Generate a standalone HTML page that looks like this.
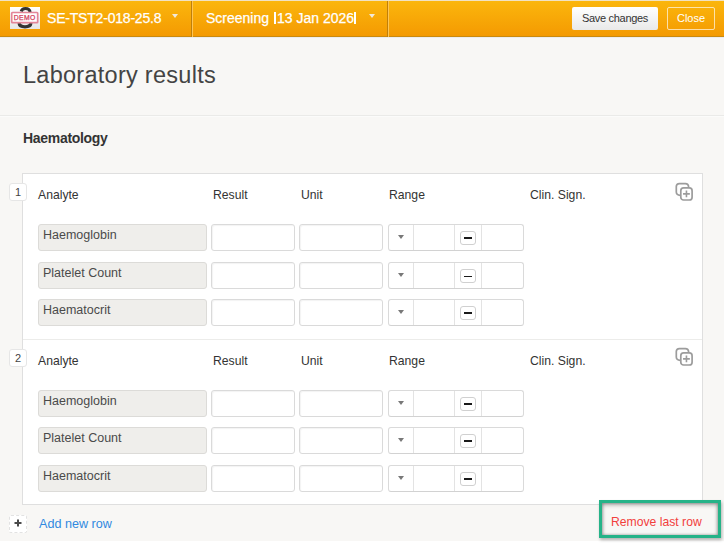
<!DOCTYPE html>
<html><head><meta charset="utf-8">
<style>
*{box-sizing:border-box;margin:0;padding:0}
html,body{width:724px;height:553px;overflow:hidden;background:#fff;font-family:"Liberation Sans",sans-serif;color:#333}
.abs{position:absolute}
#bg{position:absolute;left:0;top:0;width:724px;height:541px;background:#f8f7f5}
#hdr{position:absolute;left:0;top:0;width:724px;height:37px;background:linear-gradient(#fbb60c,#f49a02);border-top:1px solid #f1e2c2;border-bottom:1px solid #c98a10}
#hline{position:absolute;left:0;top:37px;width:724px;height:1px;background:#ececee}
.div{position:absolute;top:1px;width:2px;height:36px;border-left:1px solid #bf7f0a;border-right:1px solid #fdc555}
.htxt{position:absolute;color:#fff;font-size:14px;white-space:nowrap;-webkit-text-stroke:.25px #fff}
.brk{display:inline-block;width:1.6px;height:11.5px;background:#fff;vertical-align:-0.5px;margin-right:1.5px}
.caret{position:absolute;width:0;height:0;border-left:3.6px solid transparent;border-right:3.6px solid transparent;border-top:4.2px solid rgba(240,245,255,.85)}
#save{position:absolute;left:572px;top:7px;width:86px;height:23px;background:linear-gradient(#fff,#e9e9e9);border-radius:2px;font-size:11px;letter-spacing:-.3px;color:#333;text-align:center;line-height:22px}
#close{position:absolute;left:667px;top:7px;width:48px;height:23px;border:1px solid rgba(255,255,255,.65);border-radius:2px;font-size:11px;color:#fff;text-align:center;line-height:20px}
#title{position:absolute;left:23px;top:62px;font-size:23.5px;letter-spacing:.27px;color:#444;white-space:nowrap}
#sep{position:absolute;left:0;top:115px;width:724px;height:2px;border-top:1px solid #eaeae8;background:#fbfbfa}
#sub{position:absolute;left:23px;top:130px;font-size:14px;letter-spacing:-.3px;font-weight:bold;color:#333}
#panel{position:absolute;left:22px;top:173px;width:681px;height:332px;background:#fff;border:1px solid #dfdfdf}
.rowsep{position:absolute;left:23px;top:339px;width:679px;height:1px;background:#ececea}
.badge{position:absolute;left:9px;width:18px;height:18px;background:#fff;border:1px solid #e6e6e6;border-radius:3px;font-size:11px;text-align:center;line-height:17px;color:#444}
.lbl{position:absolute;font-size:12.2px;color:#333;white-space:nowrap}
.an{position:absolute;left:38px;width:169px;height:27px;background:#efeeeb;border:1px solid #dcdbd8;border-radius:3px;font-size:12.5px;color:#4a4a4a;padding:3px 0 0 4px;white-space:nowrap}
.inp{position:absolute;height:27px;background:#fff;border:1px solid #dadada;border-radius:3px;box-shadow:inset 1px 1px 1px rgba(0,0,0,.05)}
.rng{position:absolute;left:388px;width:136px;height:27px;background:#fff;border:1px solid #dadada;border-bottom-color:#d2d2d2;border-radius:3px}
.rng .v{position:absolute;top:0;width:1px;height:25px;background:#e3e3e3}
.rng .tri{position:absolute;left:8.8px;top:10.2px;width:0;height:0;border-left:3.4px solid transparent;border-right:3.4px solid transparent;border-top:4.6px solid #787878}
.rng .mb{position:absolute;left:71px;top:6px;width:16px;height:14px;border:1px solid #d0d0d0;border-radius:3px;background:#fff}
.rng .mb i{position:absolute;left:3px;top:5px;width:8px;height:2px;background:#1a1a1a}
.dup{position:absolute;left:675px}
#add{position:absolute;left:9px;top:515px;width:18px;height:18px;border:1px dashed #e2e2e2;border-radius:2px;background:#fff}
#addtxt{position:absolute;left:39px;top:517px;font-size:12.6px;color:#3189e0;white-space:nowrap}
#rem{position:absolute;left:599px;top:500px;width:122px;height:38px;border:3px solid #26b388;background:#f8f7f5;box-shadow:1px 2px 3px rgba(0,0,0,.28),inset 0 2px 4px rgba(0,0,0,.3),inset -1px 0 3px rgba(0,0,0,.18),inset 1px 0 3px rgba(0,0,0,.18)}
#remtxt{position:absolute;left:611px;top:515px;font-size:12.2px;color:#f2403c;white-space:nowrap}
</style></head><body>
<div id="bg"></div>
<div id="hdr"></div><div id="hline"></div>
<!-- logo -->
<svg class="abs" style="left:10px;top:7px" width="30" height="22" viewBox="0 0 30 22">
<defs><linearGradient id="lg" x1="0" y1="0" x2="0" y2="1"><stop offset="0" stop-color="#fff"/><stop offset="1" stop-color="#e6e6e6"/></linearGradient></defs>
<rect x="0" y="0" width="30" height="22" fill="url(#lg)"/>
<path d="M11.2 4.5 Q12 1.5 15.5 1.5 Q19.5 1.5 20.2 5" fill="none" stroke="#333" stroke-width="3"/>
<path d="M9 16 Q9.5 19.8 15 19.8 Q20.5 19.8 21 16" fill="none" stroke="#333" stroke-width="3.2"/>
<rect x="1.7" y="5.5" width="26" height="10.2" rx="0.8" fill="#fff" stroke="#e38598" stroke-width="1.7"/>
<text x="14.7" y="12.9" font-family="Liberation Sans" font-size="6.8" letter-spacing="0.35" stroke="#d3415d" stroke-width="0.25" fill="#d3415d" text-anchor="middle">DEMO</text>
</svg>
<div class="htxt" style="left:47px;top:10px;letter-spacing:-.2px">SE-TST2-018-25.8</div>
<div class="caret" style="left:172px;top:14px"></div>
<div class="div" style="left:191px"></div>
<div class="htxt" style="left:206px;top:10px">Screening <span class="brk" style="margin-left:1px"></span>13 Jan 2026<span class="brk"></span></div>
<div class="caret" style="left:369px;top:14px"></div>
<div class="div" style="left:387px"></div>
<div id="save">Save changes</div>
<div id="close">Close</div>

<div id="title">Laboratory results</div>
<div id="sep"></div>
<div id="sub">Haematology</div>

<div id="panel"></div>
<div class="rowsep"></div>

<!-- block 1 -->
<div class="badge" style="top:183px">1</div>
<div class="lbl" style="left:38px;top:188px">Analyte</div>
<div class="lbl" style="left:213px;top:188px">Result</div>
<div class="lbl" style="left:301px;top:188px">Unit</div>
<div class="lbl" style="left:389px;top:188px">Range</div>
<div class="lbl" style="left:530px;top:188px">Clin. Sign.</div>

<div class="an" style="top:224px">Haemoglobin</div>
<div class="inp" style="left:211px;top:224px;width:84px"></div>
<div class="inp" style="left:299px;top:224px;width:84px"></div>
<div class="rng" style="top:224px"><div class="tri"></div><div class="v" style="left:24px"></div><div class="v" style="left:65px"></div><div class="mb"><i></i></div><div class="v" style="left:92px"></div></div>

<div class="an" style="top:262px">Platelet Count</div>
<div class="inp" style="left:211px;top:262px;width:84px"></div>
<div class="inp" style="left:299px;top:262px;width:84px"></div>
<div class="rng" style="top:262px"><div class="tri"></div><div class="v" style="left:24px"></div><div class="v" style="left:65px"></div><div class="mb"><i style="top:6px;height:1.3px"></i></div><div class="v" style="left:92px"></div></div>

<div class="an" style="top:299px">Haematocrit</div>
<div class="inp" style="left:211px;top:299px;width:84px"></div>
<div class="inp" style="left:299px;top:299px;width:84px"></div>
<div class="rng" style="top:299px"><div class="tri"></div><div class="v" style="left:24px"></div><div class="v" style="left:65px"></div><div class="mb"><i></i></div><div class="v" style="left:92px"></div></div>

<!-- block 2 -->
<div class="badge" style="top:349px">2</div>
<div class="lbl" style="left:38px;top:354px">Analyte</div>
<div class="lbl" style="left:213px;top:354px">Result</div>
<div class="lbl" style="left:301px;top:354px">Unit</div>
<div class="lbl" style="left:389px;top:354px">Range</div>
<div class="lbl" style="left:530px;top:354px">Clin. Sign.</div>

<div class="an" style="top:390px">Haemoglobin</div>
<div class="inp" style="left:211px;top:390px;width:84px"></div>
<div class="inp" style="left:299px;top:390px;width:84px"></div>
<div class="rng" style="top:390px"><div class="tri"></div><div class="v" style="left:24px"></div><div class="v" style="left:65px"></div><div class="mb"><i></i></div><div class="v" style="left:92px"></div></div>

<div class="an" style="top:427px">Platelet Count</div>
<div class="inp" style="left:211px;top:427px;width:84px"></div>
<div class="inp" style="left:299px;top:427px;width:84px"></div>
<div class="rng" style="top:427px"><div class="tri"></div><div class="v" style="left:24px"></div><div class="v" style="left:65px"></div><div class="mb"><i></i></div><div class="v" style="left:92px"></div></div>

<div class="an" style="top:465px">Haematocrit</div>
<div class="inp" style="left:211px;top:465px;width:84px"></div>
<div class="inp" style="left:299px;top:465px;width:84px"></div>
<div class="rng" style="top:465px"><div class="tri"></div><div class="v" style="left:24px"></div><div class="v" style="left:65px"></div><div class="mb"><i></i></div><div class="v" style="left:92px"></div></div>

<!-- duplicate icons -->
<svg class="dup" style="top:182px" width="20" height="20" viewBox="0 0 20 20"><path d="M5.2 13.3 Q1.3 13.3 1.3 10 L1.3 4.6 Q1.3 1.6 4.4 1.6 L10.4 1.6 Q13.4 1.6 13.6 4.6" fill="none" stroke="#9c9c9c" stroke-width="1.7" stroke-linecap="round"/><rect x="5.8" y="5.9" width="11.3" height="12.1" rx="2.8" fill="#fff" stroke="#9c9c9c" stroke-width="1.7"/><path d="M11.45 8.5 V15.3 M8.05 11.9 H14.85" stroke="#9c9c9c" stroke-width="1.6"/></svg>
<svg class="dup" style="top:347px" width="20" height="20" viewBox="0 0 20 20"><path d="M5.2 13.3 Q1.3 13.3 1.3 10 L1.3 4.6 Q1.3 1.6 4.4 1.6 L10.4 1.6 Q13.4 1.6 13.6 4.6" fill="none" stroke="#9c9c9c" stroke-width="1.7" stroke-linecap="round"/><rect x="5.8" y="5.9" width="11.3" height="12.1" rx="2.8" fill="#fff" stroke="#9c9c9c" stroke-width="1.7"/><path d="M11.45 8.5 V15.3 M8.05 11.9 H14.85" stroke="#9c9c9c" stroke-width="1.6"/></svg>

<div id="add"><svg class="abs" style="left:2.6px;top:2.3px" width="10" height="10" viewBox="0 0 10 10"><path d="M5 1.5V8.5M1.5 5H8.5" stroke="#4a4a4a" stroke-width="2"/></svg></div>
<div id="addtxt">Add new row</div>
<div id="rem"></div>
<div id="remtxt">Remove last row</div>
</body></html>
